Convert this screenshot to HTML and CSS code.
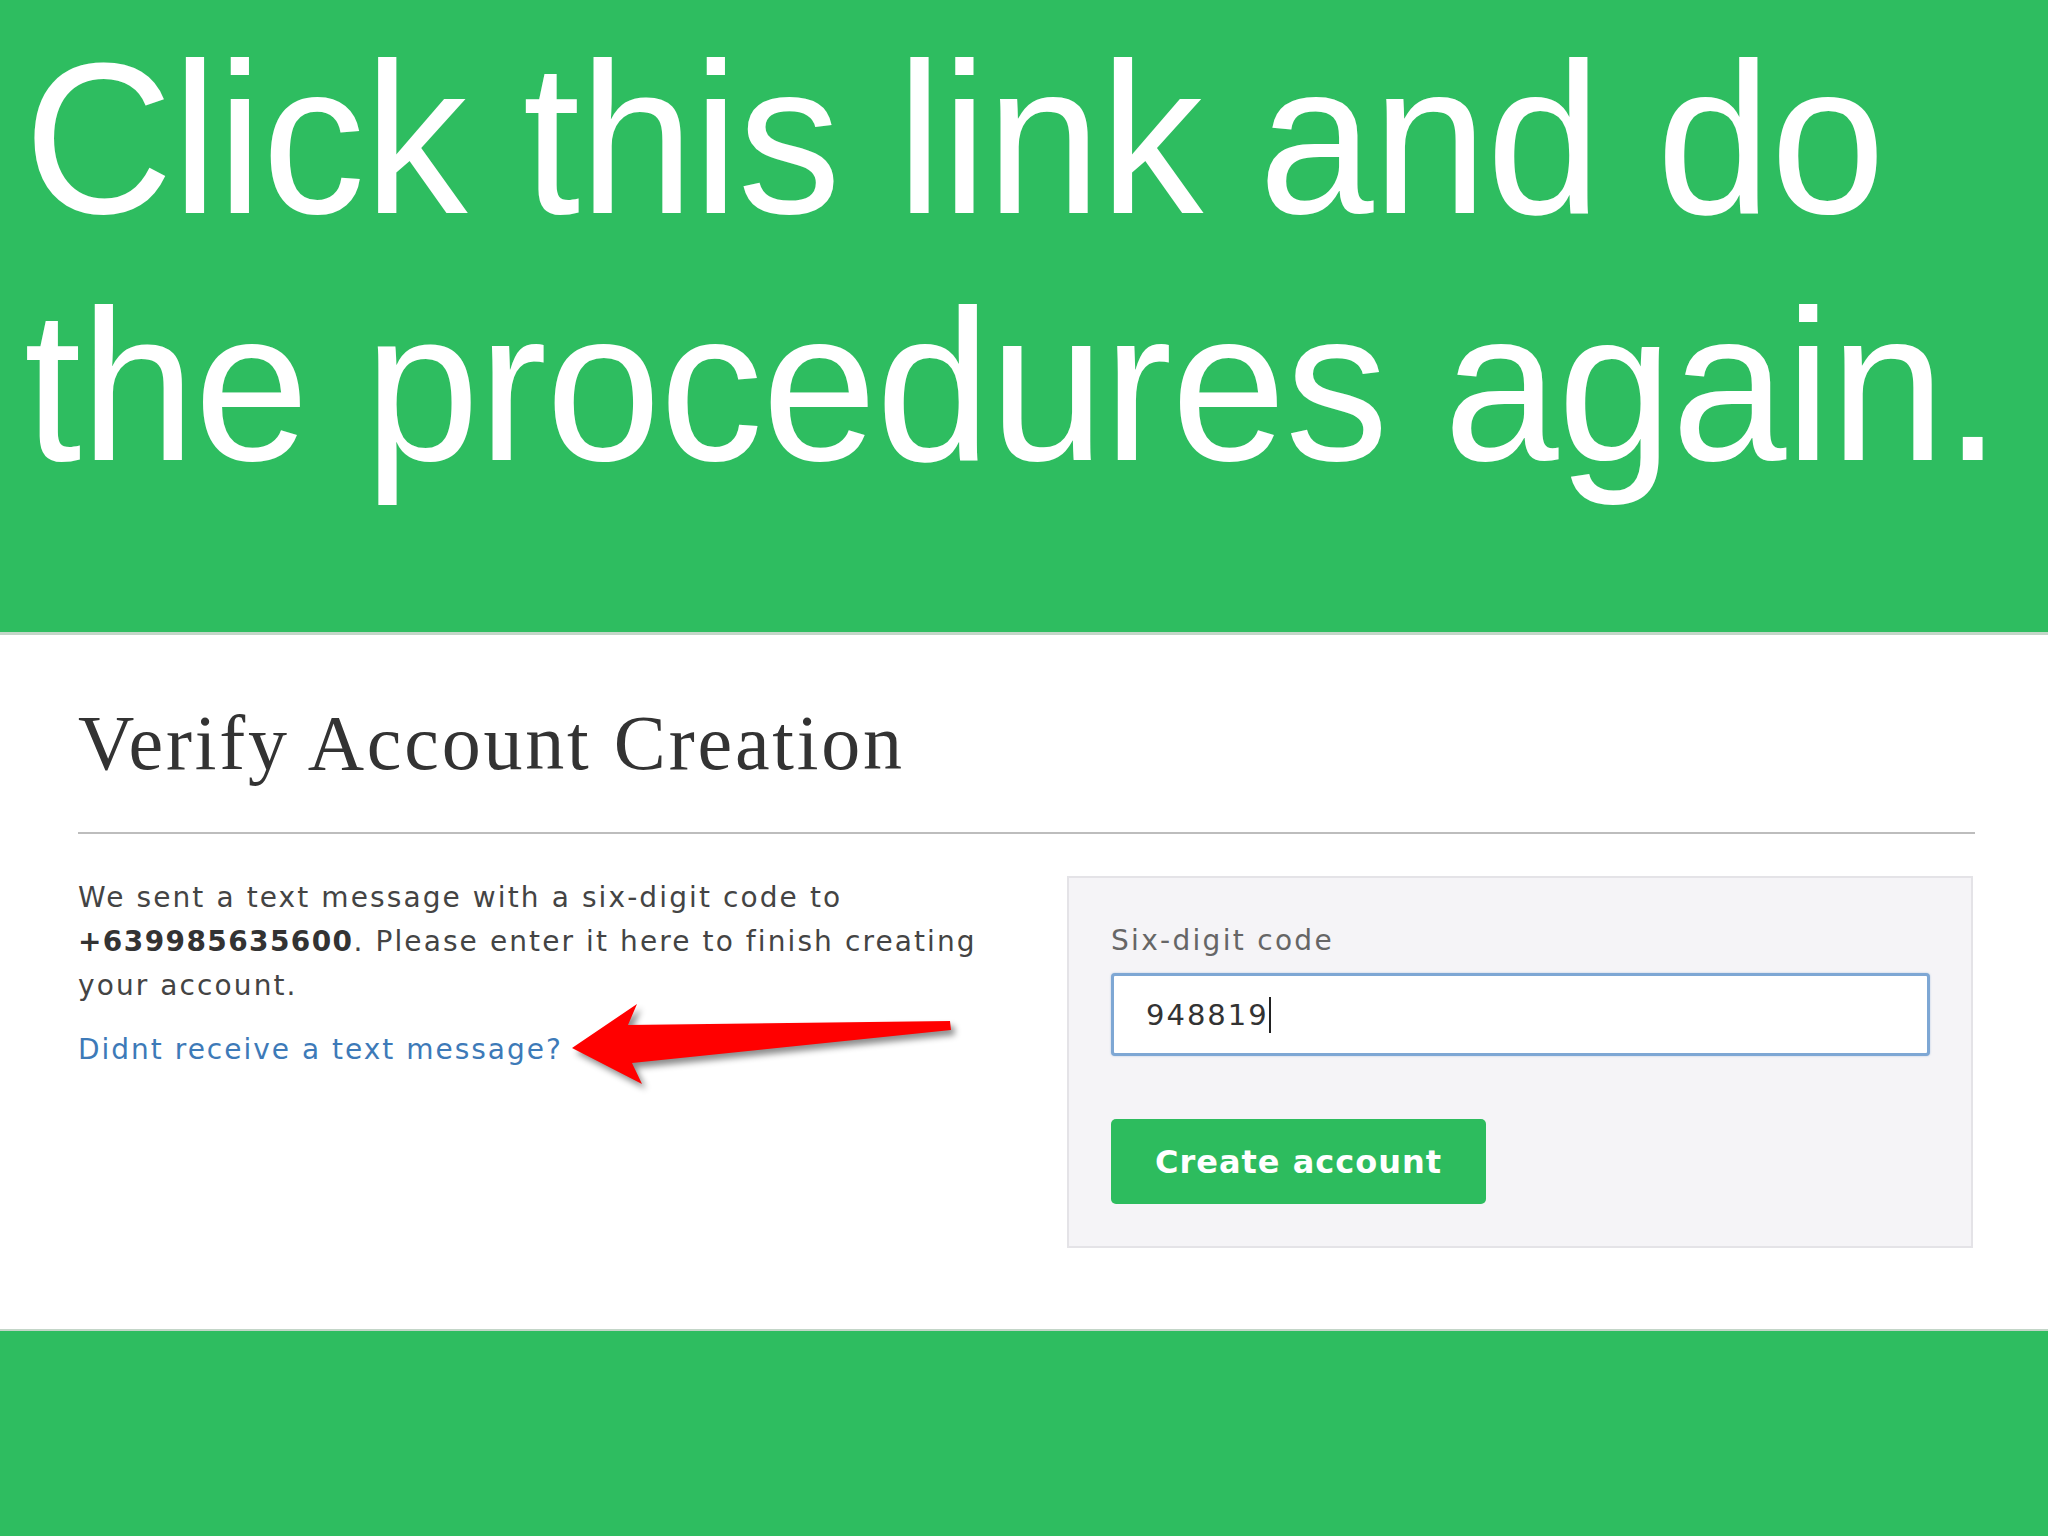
FILE: index.html
```html
<!DOCTYPE html>
<html lang="en">
<head>
<meta charset="utf-8">
<title>Verify Account Creation</title>
<link rel="stylesheet" href="styles.css">
</head>
<body>
<header class="banner">
  <p class="banner-text">Click this link and do<br>the procedures again.</p>
</header>
<main class="content">
  <h1 class="title">Verify Account Creation</h1>
  <hr class="rule">
  <div class="columns">
    <div class="info">
      <p class="message"><span>We sent a text message with a six-digit code to</span> <strong>+639985635600</strong><span>. Please enter it here to finish creating</span> <span>your account.</span></p>
      <a class="resend" href="#">Didnt receive a text message?</a>
    </div>
    <div class="panel">
      <label class="field-label">Six-digit code</label>
      <div class="code-input"><span class="code-value">948819</span><span class="caret"></span></div>
      <button class="create-btn" type="button">Create account</button>
    </div>
  </div>
  <svg class="arrow" width="410" height="110" viewBox="0 0 410 110" aria-hidden="true">
    <polygon points="12,57 77,13 68,34 390,30 391,39 72,72 82,93" fill="#ff0000"/>
  </svg>
</main>
<footer class="bottom-band"></footer>
</body>
</html>
```

FILE: styles.css
```css
html, body {
  margin: 0;
  padding: 0;
}
body {
  width: 2048px;
  height: 1536px;
  overflow: hidden;
  background: #2ebd60;
  font-family: "DejaVu Sans", "Open Sans", sans-serif;
}
.banner {
  box-sizing: border-box;
  height: 635px;
  padding: 15px 24px 0;
  background: #2ebd60;
  border-bottom: 3px solid #c3d6c8;
}
.banner-text {
  margin: 0;
  font-family: "Liberation Sans", Arial, sans-serif;
  font-size: 215px;
  line-height: 247px;
  color: #ffffff;
  letter-spacing: -1px;
  white-space: nowrap;
  transform: scaleX(0.96);
  transform-origin: left top;
}
.content {
  position: relative;
  box-sizing: border-box;
  height: 696px;
  padding: 62px 73px 0 78px;
  background: #ffffff;
  border-bottom: 2px solid #c3d6c8;
}
.title {
  margin: 0;
  font-family: "Liberation Serif", "Times New Roman", serif;
  font-weight: normal;
  font-size: 78px;
  line-height: 92px;
  letter-spacing: 2.8px;
  color: #333333;
}
.rule {
  margin: 43px 0 0;
  border: 0;
  height: 2px;
  background: #bdbdbd;
}
.columns {
  display: grid;
  grid-template-columns: 989px 906px;
  margin-top: 42px;
}
.info {
  padding-right: 59px;
}
.message {
  margin: 0;
  font-size: 28px;
  line-height: 44px;
  letter-spacing: 2.1px;
  color: #444444;
}
.message strong {
  font-weight: 700;
  letter-spacing: 1.4px;
  color: #333333;
}
.resend {
  display: inline-block;
  margin-top: 20px;
  font-size: 28px;
  line-height: 44px;
  letter-spacing: 2px;
  color: #3d7ab8;
  text-decoration: none;
}
.panel {
  box-sizing: border-box;
  height: 372px;
  padding: 43px 41px 0 42px;
  background: #f5f4f7;
  border: 2px solid #e4e3e7;
  display: flex;
  flex-direction: column;
  align-items: flex-start;
}
.field-label {
  font-size: 28px;
  line-height: 40px;
  letter-spacing: 2.3px;
  color: #666666;
}
.code-input {
  box-sizing: border-box;
  align-self: stretch;
  height: 83px;
  margin-top: 12px;
  padding-left: 32px;
  display: flex;
  align-items: center;
  background: #ffffff;
  border: 3px solid #7ea7d4;
  border-radius: 4px;
  box-shadow: 0 0 2px rgba(126, 167, 212, 0.6);
}
.code-value {
  font-size: 29px;
  letter-spacing: 2px;
  color: #333333;
}
.caret {
  width: 2px;
  height: 36px;
  background: #222222;
}
.create-btn {
  box-sizing: border-box;
  width: 375px;
  height: 85px;
  margin-top: 63px;
  padding: 0;
  border: 0;
  border-radius: 5px;
  background: #2dbc5e;
  color: #ffffff;
  font-family: "DejaVu Sans", "Open Sans", sans-serif;
  font-size: 32px;
  font-weight: 700;
  letter-spacing: 1px;
}
.arrow {
  position: absolute;
  left: 560px;
  top: 356px;
  filter: drop-shadow(4px 5px 3px rgba(0, 0, 0, 0.45));
}
.bottom-band {
  height: 205px;
  background: #2ebd60;
}
```
